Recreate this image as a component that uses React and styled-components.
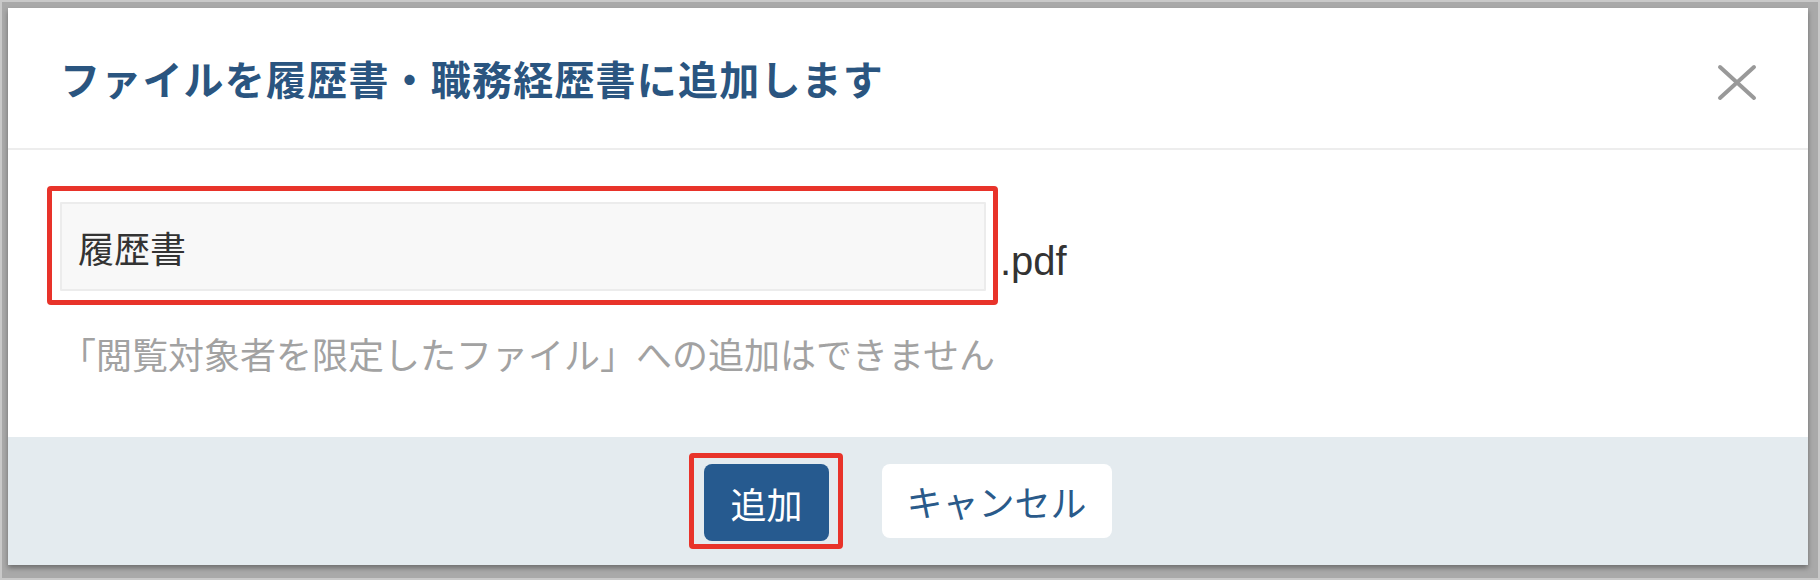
import React from "react";
import styled, { createGlobalStyle } from "styled-components";

const GlobalStyle = createGlobalStyle`
  * { box-sizing: border-box; }
  html, body { margin: 0; padding: 0; }
  body {
    width: 1820px;
    height: 580px;
    overflow: hidden;
    font-family: "Liberation Sans", "Noto Sans CJK JP", sans-serif;
    background: #a9a9a9;
  }
`;

const Screen = styled.div`
  width: 1820px;
  height: 580px;
  border: 2px solid #c9c9c9;
  background: #a9a9a9;
  padding: 6px 10px 13px 6px;
`;

const Modal = styled.div`
  width: 1800px;
  height: 557px;
  background: #ffffff;
  display: flex;
  flex-direction: column;
  box-shadow: 0 3px 5px rgba(0, 0, 0, 0.35);
`;

const Header = styled.div`
  height: 142px;
  flex: none;
  display: flex;
  align-items: center;
  justify-content: space-between;
  padding: 0 51px 0 52px;
  border-bottom: 2px solid #ededed;
`;

const Title = styled.h2`
  margin: 0;
  font-family: "Noto Sans CJK JP", sans-serif;
  font-size: 40px;
  line-height: 47px;
  letter-spacing: 1.2px;
  font-weight: 700;
  color: #2a5580;
`;

const CloseButton = styled.button`
  border: none;
  background: none;
  padding: 0;
  margin-top: 8px;
  width: 40px;
  height: 37px;
  display: flex;
  cursor: pointer;
`;

const Body = styled.div`
  flex: none;
  height: 287px;
  padding: 36px 52px 0 52px;
  display: flex;
  flex-direction: column;
`;

const FileRow = styled.div`
  display: flex;
  align-items: flex-end;
  margin-left: -13px;
`;

const Highlight = styled.div`
  display: inline-flex;
  border: 5px solid #e8332a;
  border-radius: 4px;
  padding: ${(p) => p.$pad};
  margin-left: ${(p) => p.$shift || "0"};
`;

const NameInput = styled.input`
  width: 926px;
  height: 89px;
  background: #f8f8f8;
  border: 2px solid #ececec;
  border-radius: 1px;
  padding: 0 0 0 16px;
  font-family: "Liberation Sans", "Noto Sans CJK JP", sans-serif;
  font-size: 36px;
  color: #333333;
  outline: none;
`;

const Extension = styled.span`
  font-family: "Liberation Sans", sans-serif;
  font-size: 40px;
  line-height: 40px;
  color: #333333;
  margin: 0 0 24px 2px;
`;

const HelpText = styled.p`
  margin: 23px 0 0 0;
  font-family: "Noto Sans CJK JP", sans-serif;
  font-size: 36px;
  line-height: 50px;
  color: #a2a2a2;
`;

const Footer = styled.div`
  flex: none;
  height: 128px;
  background: #e4ebef;
  display: flex;
  align-items: center;
  justify-content: center;
  gap: 39px;
`;

const Button = styled.button`
  height: ${(p) => (p.$primary ? "77px" : "74px")};
  padding: 0 ${(p) => (p.$primary ? "26px" : "25px")};
  border: none;
  border-radius: 8px;
  background: ${(p) => (p.$primary ? "#265a8f" : "#ffffff")};
  color: ${(p) => (p.$primary ? "#ffffff" : "#2a5a8a")};
  font-family: "Noto Sans CJK JP", sans-serif;
  font-size: 36px;
  line-height: 1;
  cursor: pointer;
`;

export default function App() {
  return (
    <>
      <GlobalStyle />
      <Screen>
        <Modal>
          <Header>
            <Title>ファイルを履歴書・職務経歴書に追加します</Title>
            <CloseButton aria-label="閉じる">
              <svg width="40" height="37" viewBox="0 0 40 37" fill="none">
                <path
                  d="M3 3 L37 34 M37 3 L3 34"
                  stroke="#999999"
                  strokeWidth="4"
                  strokeLinecap="round"
                />
              </svg>
            </CloseButton>
          </Header>
          <Body>
            <FileRow>
              <Highlight $pad="11px 7px 9px 8px">
                <NameInput defaultValue="履歴書" readOnly />
              </Highlight>
              <Extension>.pdf</Extension>
            </FileRow>
            <HelpText>「閲覧対象者を限定したファイル」への追加はできません</HelpText>
          </Body>
          <Footer>
            <Highlight $pad="6px 9px 3px 10px" $shift="-15px">
              <Button $primary>追加</Button>
            </Highlight>
            <Button>キャンセル</Button>
          </Footer>
        </Modal>
      </Screen>
    </>
  );
}
